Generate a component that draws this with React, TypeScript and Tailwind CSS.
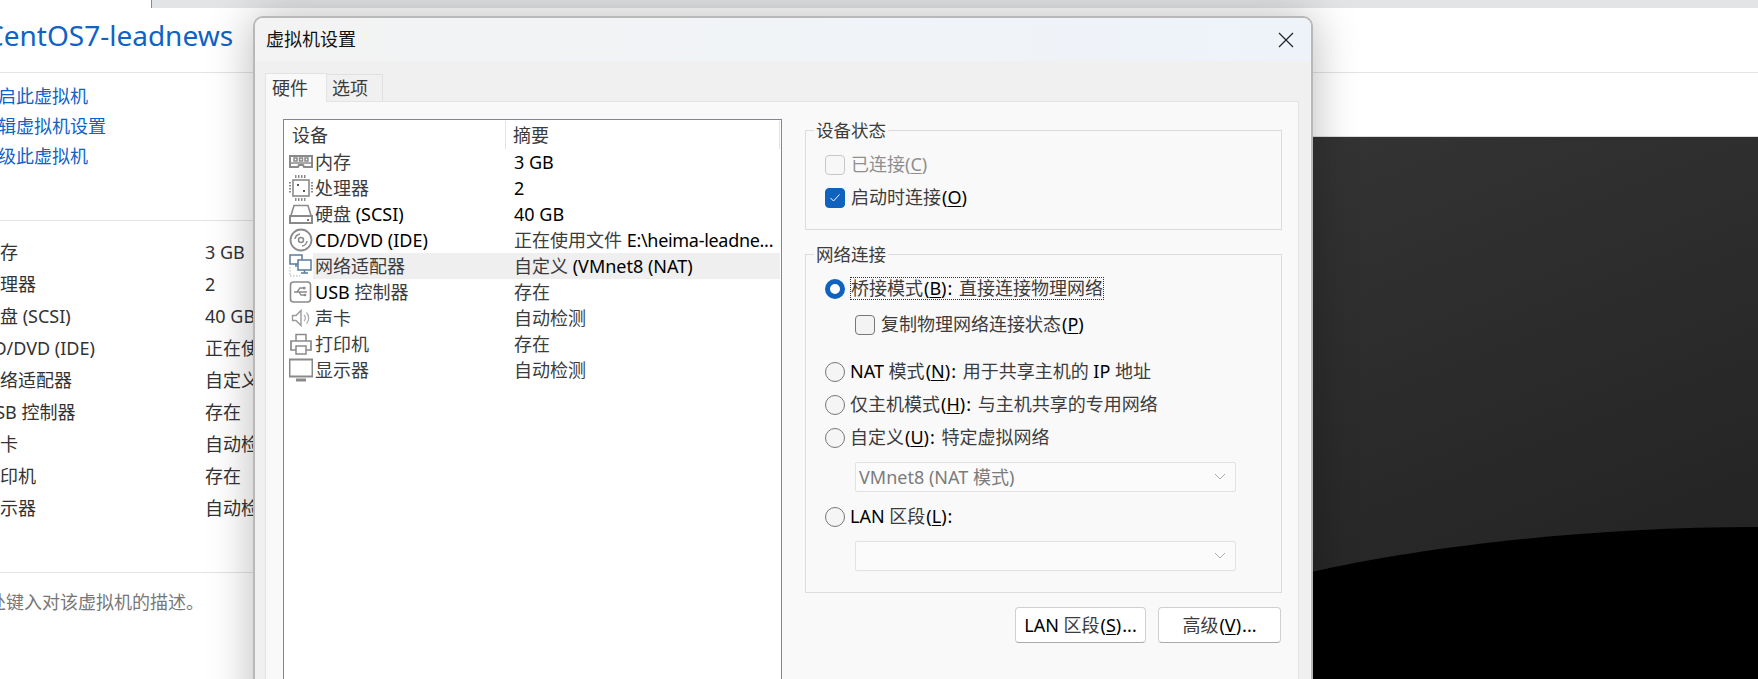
import React from "react";

const Ic = ({ children }: { children: React.ReactNode }) => (
  <svg width="24" height="26" viewBox="0 0 24 26" fill="none" stroke="#8a8a8a" strokeWidth="1.5" className="shrink-0">
    {children}
  </svg>
);

const icons: Record<string, React.ReactNode> = {
  mem: (
    <Ic>
      <path d="M1 7h22v11h-8l-1-2h-4l-1 2H1z" strokeWidth="2" />
      <path d="M1 14h22" />
      <rect x="5" y="9" width="3" height="3" />
      <rect x="10.5" y="9" width="3" height="3" />
      <rect x="16" y="9" width="3" height="3" />
    </Ic>
  ),
  cpu: (
    <Ic>
      <rect x="4" y="5" width="16" height="16" strokeWidth="1.6" />
      <path d="M6 1.5h12M6 24.5h12M.5 7v12M23.5 7v12" strokeWidth="3" strokeDasharray="1.5 1.5" />
      <rect x="8" y="9" width="2" height="2" fill="#555" stroke="none" />
      <rect x="14" y="15" width="2" height="2" fill="#555" stroke="none" />
    </Ic>
  ),
  hdd: (
    <Ic>
      <path d="M1.5 16 5 4.5h14L22.5 16" strokeWidth="1.6" />
      <rect x="1" y="15" width="22" height="7" strokeWidth="2" />
      <rect x="18" y="18" width="2" height="2" fill="#777" stroke="none" />
    </Ic>
  ),
  cd: (
    <Ic>
      <circle cx="12" cy="13" r="10.5" strokeWidth="1.8" />
      <circle cx="12" cy="13" r="2.5" />
      <path d="M6 12a6 6 0 0 1 5-5M18 14a6 6 0 0 1-5 5" />
    </Ic>
  ),
  net: (
    <Ic>
      <g stroke="#5b7c9d">
        <rect x="1" y="2" width="12" height="9" />
        <path d="M7 11v3" />
      </g>
      <rect x="9" y="7" width="13" height="10" fill="#fff" stroke="#5b7c9d" />
      <path d="M15.5 17v3M12 20h7" stroke="#5b7c9d" />
      <path d="M1 14v9h10" stroke="#aaa" strokeWidth="1" strokeDasharray="1.5 1.5" />
    </Ic>
  ),
  usb: (
    <Ic>
      <rect x="1.5" y="3" width="20" height="20" rx="3" strokeWidth="1.6" />
      <path d="M5 13h13M8 13l3-4h3M10 13l2 3h3" strokeWidth="1.3" />
      <rect x="14" y="7.8" width="2.5" height="2.5" fill="#8a8a8a" stroke="none" />
      <circle cx="16" cy="16" r="1.3" fill="#8a8a8a" stroke="none" />
    </Ic>
  ),
  snd: (
    <Ic>
      <path d="M3.5 10.5h3.5l5-5v15l-5-5H3.5z" strokeWidth="1.4" stroke="#9a9a9a" />
      <path d="M15 10a4 4 0 0 1 0 6M17.5 7.5a8 8 0 0 1 0 11" strokeWidth="1.2" stroke="#aaa" />
    </Ic>
  ),
  prt: (
    <Ic>
      <path d="M7 10V3.5h10V10" />
      <path d="M7 19H2v-9h20v9h-5" strokeWidth="1.7" />
      <rect x="7" y="15" width="10" height="8" />
    </Ic>
  ),
  mon: (
    <Ic>
      <rect x="0.5" y="2.5" width="23" height="17" strokeWidth="2" />
      <path d="M7 23h10" strokeWidth="3" />
    </Ic>
  ),
};

function L({ children }: { children: React.ReactNode }) {
  return <span className="text-black">{children}</span>;
}
const A = ({ children }: { children: React.ReactNode }) => (
  <span className="mx-px text-black">
    (<span className="underline underline-offset-2">{children}</span>)
  </span>
);
const Colon = () => <span className="mr-[2px] text-black">:</span>;

const rows: { ic: string; name: React.ReactNode; val: React.ReactNode; sel?: boolean }[] = [
  { ic: "mem", name: "内存", val: <L>3 GB</L> },
  { ic: "cpu", name: "处理器", val: <L>2</L> },
  { ic: "hdd", name: <>硬盘 <L>(SCSI)</L></>, val: <L>40 GB</L> },
  { ic: "cd", name: <L>CD/DVD (IDE)</L>, val: <>正在使用文件 <span className="tracking-[-0.3px] text-black">E:\heima-leadne...</span></> },
  { ic: "net", name: "网络适配器", val: <>自定义 <L>(VMnet8 (NAT)</L></>, sel: true },
  { ic: "usb", name: <><L>USB</L> 控制器</>, val: "存在" },
  { ic: "snd", name: "声卡", val: "自动检测" },
  { ic: "prt", name: "打印机", val: "存在" },
  { ic: "mon", name: "显示器", val: "自动检测" },
];

const Group = ({ title, cls, children }: { title: string; cls: string; children: React.ReactNode }) => (
  <div className={`relative border border-[#dcdcdc] pl-[19px] pt-[17px] ${cls}`}>
    <span className="absolute left-[8px] top-[-12px] bg-[#f9f9f9] px-[2px] text-[17.5px] leading-[22px]">{title}</span>
    {children}
  </div>
);

const Check = ({ on, dis, label, cls = "" }: { on?: boolean; dis?: boolean; label: React.ReactNode; cls?: string }) => (
  <div className={`flex items-center gap-[6px] ${cls}`}>
    <span
      className={`flex h-[20px] w-[20px] items-center justify-center rounded-[4px] border ${
        on ? "border-[#0f62be] bg-[#0f62be]" : dis ? "border-[#c8c8c8] bg-[#f7f7f7]" : "border-[#777] bg-[#f3f3f3]"
      }`}
    >
      {on && (
        <svg width="12" height="10" viewBox="0 0 12 10" fill="none" stroke="#fff" strokeWidth="1">
          <path d="M1.5 5l3 3 6-6.5" />
        </svg>
      )}
    </span>
    <span className={dis ? "text-[#8f8f8f]" : ""}>{label}</span>
  </div>
);

const Radio = ({ on, label, cls = "" }: { on?: boolean; label: React.ReactNode; cls?: string }) => (
  <div className={`flex h-[33px] items-center gap-[5px] ${cls}`}>
    <span
      className={`h-[20px] w-[20px] rounded-full ${
        on ? "border-[5px] border-[#0f62be] bg-white" : "border border-[#777] bg-[#f5f5f5]"
      }`}
    />
    {label}
  </div>
);

const Select = ({ text, cls = "" }: { text?: React.ReactNode; cls?: string }) => (
  <div className={`ml-[30px] flex h-[30px] w-[381px] items-center justify-between rounded-[2px] border border-[#e2e2e2] bg-[#fbfbfb] pl-[3px] pr-[9px] text-[#7c7c7c] ${cls}`}>
    <span>{text}</span>
    <svg width="12" height="8" viewBox="0 0 12 8" fill="none" stroke="#aaa" strokeWidth="1">
      <path d="M1 1l5 5 5-5" />
    </svg>
  </div>
);

const Btn = ({ w, children }: { w: string; children: React.ReactNode }) => (
  <button className={`flex h-[36px] ${w} items-center justify-center rounded-[4px] border border-[#d0d0d0] border-b-[#aaa] bg-white`}>
    {children}
  </button>
);

export default function App() {
  return (
    <div className="relative h-[679px] w-[1758px] overflow-hidden bg-white text-[18px] text-[#3c3c3c] [font-family:'Noto_Sans','Noto_Sans_CJK_SC',sans-serif]">
      {/* top strip */}
      <div className="ml-[151px] h-[8px] border-l border-[#8b8b8b] bg-[#e3e4e6]" />

      {/* header */}
      <div className="h-[65px] border-b border-[#e3e3e3]">
        <div className="-ml-[14px] pt-[6px] text-[28px] leading-[42px] text-[#0f62c6]">CentOS7-leadnews</div>
      </div>

      <div className="flex">
        {/* left column */}
        <div className="w-[400px] shrink-0">
          <div className="-ml-[20px] flex h-[147px] flex-col pt-[8px] leading-[30px] text-[#0f62c6]">
            <div>开启此虚拟机</div>
            <div>编辑虚拟机设置</div>
            <div>升级此虚拟机</div>
          </div>
          <div className="h-[352px] border-t border-[#e3e3e3] pt-[15px] leading-[32px] text-[#333]">
            {[
              ["内存", "3 GB"],
              ["处理器", "2"],
              ["硬盘 (SCSI)", "40 GB"],
              ["CD/DVD (IDE)", "正在使用文件"],
              ["网络适配器", "自定义"],
              ["USB 控制器", "存在"],
              ["声卡", "自动检测"],
              ["打印机", "存在"],
              ["显示器", "自动检测"],
            ].map(([a, b]) => (
              <div key={a} className="-ml-[18px] flex">
                <div className="w-[223px] shrink-0">{a}</div>
                <div>{b}</div>
              </div>
            ))}
          </div>
          <div className="border-t border-[#e3e3e3] pt-[14px] leading-[30px] text-[#777]">
            <div className="-ml-[48px]">在此处键入对该虚拟机的描述。</div>
          </div>
        </div>

        {/* right column */}
        <div className="flex-1">
          <div className="h-[63px]" />
          <div className="relative h-[543px] border-t border-[#dddddd] bg-gradient-to-br from-[#3e3e3e] to-[#202020]">
            <svg className="absolute inset-0" width="1358" height="543" viewBox="0 0 1358 543">
              <path d="M911 435C1017 411 1183 390 1358 390V543H911z" fill="#000" />
            </svg>
          </div>
        </div>
      </div>

      {/* dialog */}
      <div className="absolute left-[253px] top-[16px] h-[720px] w-[1060px] rounded-t-[10px] border-2 border-[#b8b8b8] bg-[#f0f0f0] shadow-[0_0_45px_rgba(0,0,0,0.28)]">
        <div className="flex h-[43px] items-center justify-between rounded-t-[8px] bg-gradient-to-r from-[#f3f3f3] to-[#eef3fa] pl-[11px] pr-[17px]">
          <span className="text-[18px] text-[#111]">虚拟机设置</span>
          <svg width="16" height="16" viewBox="0 0 16 16" fill="none" stroke="#222" strokeWidth="1.2">
            <path d="M1 1l14 14M15 1L1 15" />
          </svg>
        </div>

        <div className="pl-[10px]">
          <div className="flex h-[40px] items-end">
            <div className="relative -mb-px flex h-[29px] w-[62px] items-center border border-b-0 border-[#e3e3e3] bg-[#f9f9f9] pl-[6px]">硬件</div>
            <div className="flex h-[27px] w-[56px] items-center border border-l-0 border-b-0 border-[#e0e0e0] bg-[#f0f0f0] pl-[5px]">选项</div>
          </div>

          <div className="flex h-[640px] w-[1034px] gap-[23px] border border-[#e3e3e3] bg-[#f9f9f9] pl-[17px] pt-[17px]">
            {/* device list */}
            <div className="h-[700px] w-[499px] shrink-0 border border-[#85858f] bg-white">
              <div className="flex h-[29px] items-center pt-px">
                <div className="h-full w-[222px] border-r border-[#e3e3e3] pl-[8px] leading-[29px]">设备</div>
                <div className="h-full w-[274px] border-r border-[#e3e3e3] pl-[7px] leading-[29px]">摘要</div>
              </div>
              {rows.map((r) => (
                <div key={r.ic} className="flex h-[26px] items-center pl-[5px]">
                  {icons[r.ic]}
                  <div className={`flex h-full w-[467px] items-center leading-[26px] ${r.sel ? "bg-[#efefef]" : ""}`}>
                    <div className="w-[201px] shrink-0 pl-[2px]">{r.name}</div>
                    <div className="whitespace-nowrap">{r.val}</div>
                  </div>
                </div>
              ))}
            </div>

            {/* right options */}
            <div className="w-[477px] shrink-0 pt-[11px]">
              <Group title="设备状态" cls="h-[100px]">
                <Check dis cls="h-[33px]" label={<>已连接(<span className="underline underline-offset-2">C</span>)</>} />
                <Check on cls="h-[33px]" label={<>启动时连接<A>O</A></>} />
              </Group>

              <Group title="网络连接" cls="mt-[24px] h-[339px]">
                <Radio
                  on
                  label={
                    <span className="border border-dotted border-[#333] leading-[21px]">
                      桥接模式<A>B</A><Colon /> 直接连接物理网络
                    </span>
                  }
                />
                <Check cls="ml-[30px] h-[39px]" label={<>复制物理网络连接状态<A>P</A></>} />
                <Radio cls="mt-[11px]" label={<span><L>NAT</L> 模式<A>N</A><Colon /> 用于共享主机的 <L>IP</L> 地址</span>} />
                <Radio label={<span>仅主机模式<A>H</A><Colon /> 与主机共享的专用网络</span>} />
                <Radio label={<span>自定义<A>U</A><Colon /> 特定虚拟网络</span>} />
                <Select cls="mt-[8px]" text="VMnet8 (NAT 模式)" />
                <Radio cls="mt-[8px]" label={<span><L>LAN</L> 区段<A>L</A><L>:</L></span>} />
                <Select cls="mt-[8px]" />
              </Group>

              <div className="mt-[14px] flex justify-end gap-[12px] pr-px">
                <Btn w="w-[131px]"><span><L>LAN</L> 区段<A>S</A><L>...</L></span></Btn>
                <Btn w="w-[123px]"><span>高级<A>V</A><L>...</L></span></Btn>
              </div>
            </div>
          </div>
        </div>
      </div>
    </div>
  );
}
